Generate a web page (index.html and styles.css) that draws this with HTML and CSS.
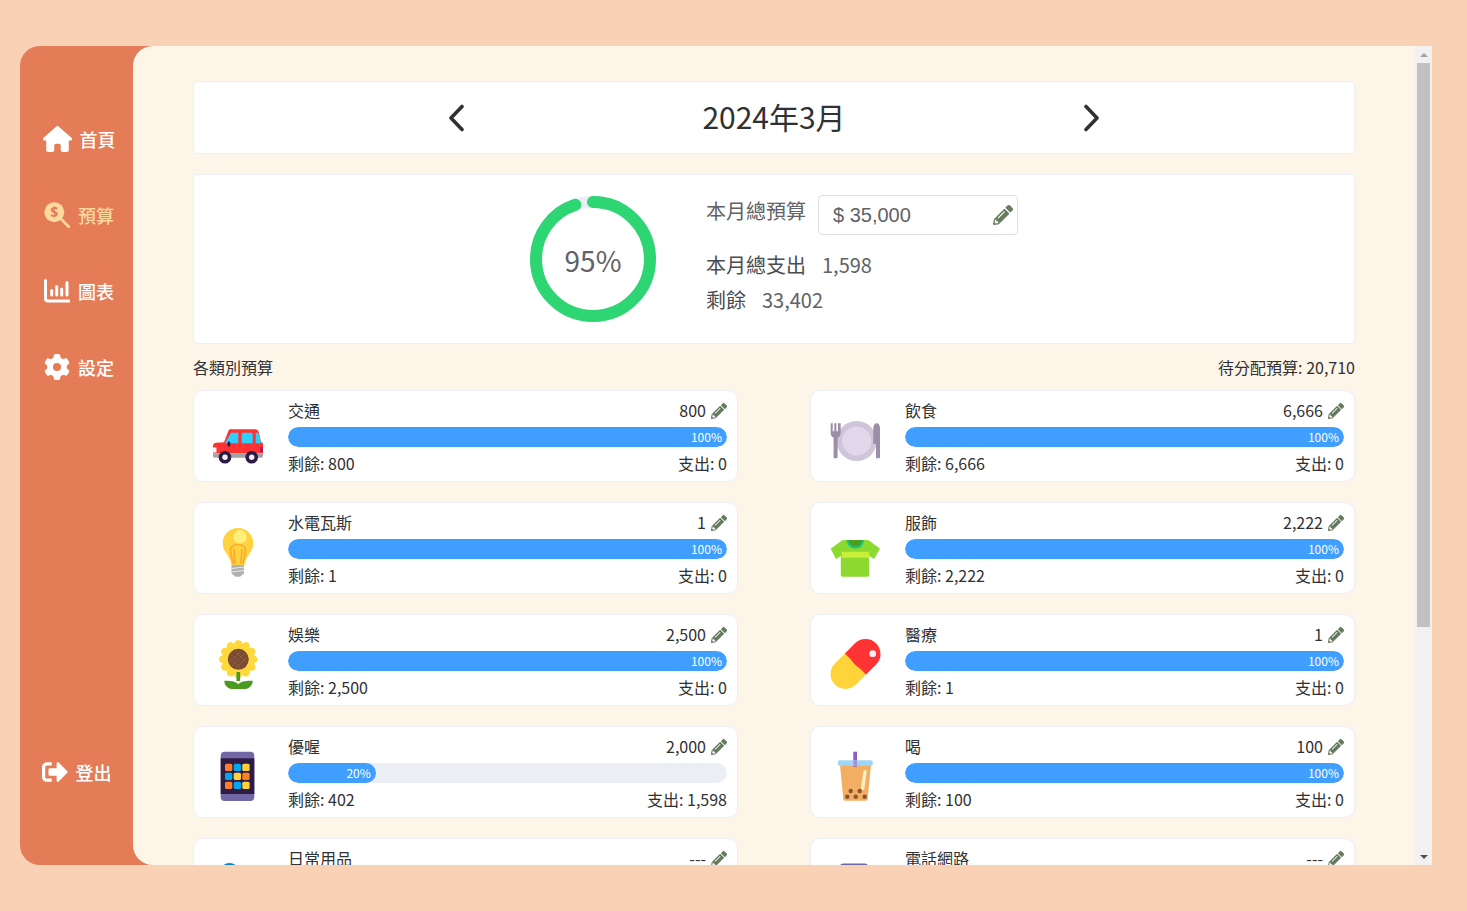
FILE: index.html
```html
<!DOCTYPE html>
<html lang="zh-Hant">
<head>
<meta charset="utf-8">
<title>預算</title>
<link rel="stylesheet" href="styles.css">
</head>
<body>
<svg class="defs" aria-hidden="true">
  <symbol id="pencil" viewBox="0 0 512 512"><path d="M497.900 142.100l-46.100 46.100c-4.700 4.700-12.300 4.700-17 0l-111-111c-4.700-4.700-4.700-12.300 0-17l46.100-46.100c18.700-18.700 49.100-18.700 67.900 0l60.100 60.100c18.800 18.700 18.800 49.100 0 67.900zM284.200 99.800L21.600 362.400.4 483.900c-2.900 16.400 11.400 30.600 27.800 27.800l121.500-21.300 262.600-262.600c4.700-4.700 4.700-12.300 0-17l-111-111c-4.800-4.700-12.400-4.700-17.100 0zM124.100 339.900c-5.500-5.500-5.500-14.300 0-19.800l154-154c5.500-5.500 14.300-5.500 19.800 0s5.500 14.300 0 19.800l-154 154c-5.500 5.500-14.300 5.500-19.800 0zM88 424h48v36.300l-64.500 11.300-31.100-31.100L51.700 376H88v48z"/></symbol>
</svg>
<div class="app">
  <aside class="sidebar">
    <nav class="nav">
      <a class="nav-item">
        <svg class="ic-home" viewBox="0 0 576 512"><path d="M575.8 255.5c0 18-15 32.1-32 32.1h-32l.7 160.2c0 2.7-.2 5.4-.5 8.1V472c0 22.1-17.9 40-40 40H456c-1.1 0-2.2 0-3.3-.1c-1.4 .1-2.8 .1-4.2 .1H416 392c-22.1 0-40-17.9-40-40V448 384c0-17.7-14.3-32-32-32H256c-17.7 0-32 14.3-32 32v64 24c0 22.1-17.9 40-40 40H160 128.1c-1.5 0-3-.1-4.5-.2c-1.2 .1-2.4 .2-3.6 .2H104c-22.1 0-40-17.9-40-40V360c0-.9 0-1.9 .1-2.8V287.6H32c-18 0-32-14-32-32.1c0-9 3-17 10-24L266.4 8c7-7 15-8 22-8s15 2 21 7L564.8 231.5c8 7 12 15 11 24z"/></svg>
        <span>首頁</span>
      </a>
      <a class="nav-item active">
        <svg class="ic" viewBox="0 0 26 26"><path class="stroke-handle" d="M16 16l9 9"/><circle cx="10.300" cy="10.300" r="10"/><text class="dollar" x="10.300" y="15.200">$</text></svg>
        <span>預算</span>
      </a>
      <a class="nav-item">
        <svg class="ic" viewBox="0 0 26 26"><path class="chart-axis" d="M1.500 2.500V20.500a2.500 2.500 0 0 0 2.500 2.500H25"/><path class="chart-bars" d="M7.700 12.500v4.500M12.700 8.500v8.500M17.700 11v6M23 4.500v12.500"/></svg>
        <span>圖表</span>
      </a>
      <a class="nav-item">
        <svg class="ic" viewBox="0 0 512 512"><path d="M495.9 166.6c3.2 8.7 .5 18.4-6.4 24.6l-43.3 39.4c1.1 8.3 1.700 16.800 1.700 25.400s-.6 17.100-1.700 25.400l43.300 39.400c6.900 6.200 9.600 15.900 6.400 24.600c-4.400 11.900-9.700 23.300-15.800 34.300l-4.700 8.100c-6.600 11-14 21.400-22.100 31.200c-5.900 7.200-15.700 9.600-24.500 6.800l-55.700-17.700c-13.400 10.300-28.200 18.900-44 25.400l-12.500 57.100c-2 9.100-9 16.300-18.200 17.800c-13.800 2.300-28 3.500-42.500 3.500s-28.700-1.200-42.500-3.500c-9.200-1.500-16.200-8.700-18.200-17.800l-12.500-57.100c-15.800-6.500-30.600-15.100-44-25.400L83.100 425.900c-8.800 2.800-18.600 .3-24.500-6.800c-8.100-9.800-15.500-20.200-22.100-31.200l-4.700-8.100c-6.100-11-11.400-22.400-15.800-34.300c-3.200-8.700-.5-18.400 6.400-24.600l43.300-39.400C64.600 273.100 64 264.600 64 256s.6-17.100 1.700-25.400L22.400 191.200c-6.900-6.200-9.600-15.900-6.400-24.600c4.400-11.900 9.700-23.300 15.800-34.300l4.700-8.100c6.600-11 14-21.400 22.100-31.200c5.900-7.200 15.700-9.600 24.500-6.800l55.700 17.700c13.400-10.300 28.200-18.900 44-25.400l12.500-57.100c2-9.100 9-16.300 18.200-17.800C227.300 1.200 241.500 0 256 0s28.700 1.200 42.500 3.500c9.200 1.500 16.200 8.700 18.200 17.800l12.500 57.100c15.800 6.500 30.600 15.100 44 25.400l55.700-17.700c8.800-2.800 18.600-.3 24.500 6.800c8.100 9.800 15.500 20.200 22.100 31.200l4.700 8.100c6.100 11 11.400 22.400 15.800 34.300zM256 336a80 80 0 1 0 0-160 80 80 0 1 0 0 160z"/></svg>
        <span>設定</span>
      </a>
    </nav>
    <a class="nav-item logout">
      <svg class="ic" viewBox="0 0 512 512"><path d="M497 273L329 441c-15 15-41 4.500-41-17v-96H152c-13.300 0-24-10.700-24-24v-96c0-13.300 10.700-24 24-24h136V88c0-21.400 25.900-32 41-17l168 168c9.300 9.400 9.300 24.600 0 34zM192 436v-40c0-6.600-5.400-12-12-12H96c-17.700 0-32-14.300-32-32V160c0-17.700 14.300-32 32-32h84c6.600 0 12-5.400 12-12V76c0-6.600-5.400-12-12-12H96c-53 0-96 43-96 96v192c0 53 43 96 96 96h84c6.600 0 12-5.400 12-12z"/></svg>
      <span>登出</span>
    </a>
  </aside>

  <main class="main">
    <div class="content">
      <section class="panel month">
        <svg class="chev" viewBox="0 0 16 28"><path d="M14 2.500L3 14l11 11.500"/></svg>
        <h1 class="month-title">2024年3月</h1>
        <svg class="chev" viewBox="0 0 16 28"><path d="M2 2.500L13 14 2 25.500"/></svg>
      </section>

      <section class="panel summary">
        <div class="gauge">
          <svg viewBox="0 0 126 126">
            <circle class="gauge-track" cx="63" cy="63" r="57"/>
            <circle class="gauge-fill" cx="63" cy="63" r="57" pathLength="100" transform="rotate(-90 63 63)"/>
          </svg>
          <span class="gauge-text">95%</span>
        </div>
        <div class="totals">
          <div class="budget-row">
            <span class="budget-label">本月總預算</span>
            <div class="budget-input">
              <span class="budget-amount">$ 35,000</span>
              <svg class="pencil-lg"><use href="#pencil"/></svg>
            </div>
          </div>
          <div class="total-line"><span class="total-label">本月總支出</span><span>1,598</span></div>
          <div class="total-line"><span class="total-label">剩餘</span><span>33,402</span></div>
        </div>
      </section>

      <div class="section-head"><span>各類別預算</span><span>待分配預算: 20,710</span></div>

      <div class="cards">
        <article class="card">
          <svg class="emoji" viewBox="0 0 50 50">
            <path fill="#ff3232" d="M18 14.300h24c2 0 3.300 1 3.800 3L48 27c1.300.3 2 1.200 2 2.500V38.300H0V31c0-1.800 1.200-2.900 3-3.200l8-.5 4-10.300c.6-1.700 1.500-3 3-3z"/>
            <path fill="#a3a3a3" d="M0 38.300h50v2.400c0 1.200-.8 2-2 2H2c-1.200 0-2-.8-2-2z"/>
            <path fill="#2dcfff" d="M12 28.300l6-10.600h7.300v10.600zM28.700 19.200c0-.9.600-1.500 1.500-1.500h8c.9 0 1.500.6 1.500 1.500v9.100H28.700zM42.700 17.700h2.500l3.100 10.600h-5.600z"/>
            <rect fill="#2d1b45" x="14.500" y="26.500" width="2.800" height="5" rx="1.200"/>
            <rect fill="#f4f4f4" x="0" y="32.500" width="3.500" height="5"/>
            <rect fill="#c2185b" x="47" y="32" width="3" height="5"/>
            <circle fill="#2d1b45" cx="12" cy="42.300" r="6.300"/><circle fill="#f2eef2" cx="12" cy="42.300" r="2.700"/>
            <circle fill="#2d1b45" cx="38.700" cy="42.300" r="6.300"/><circle fill="#f2eef2" cx="38.700" cy="42.300" r="2.700"/>
          </svg>
          <div class="card-body">
            <div class="row"><span>交通</span><span class="value">800<svg class="pencil"><use href="#pencil"/></svg></span></div>
            <div class="bar"><div class="bar-fill" style="width:100%">100%</div></div>
            <div class="row"><span>剩餘: 800</span><span>支出: 0</span></div>
          </div>
        </article>

        <article class="card">
          <svg class="emoji" viewBox="0 0 50 50">
            <path fill="#ffd23f" d="M25 1c8.500 0 15.300 6.800 15.300 15.300 0 4.300-1.800 7.500-4 10.700-2.200 3.200-4.300 6.500-4.800 11H18.500c-.5-4.500-2.600-7.800-4.800-11-2.200-3.200-4-6.400-4-10.700C9.700 7.800 16.500 1 25 1z"/>
            <path fill="none" stroke="#fba92c" stroke-width="1.600" d="M20 37c-.3-5-2.500-9-2.500-14 0-3 3-5.500 7.500-5.500s7.500 2.500 7.500 5.500c0 5-2.200 9-2.500 14M21 22l1 15M29 22l-1 15"/>
            <circle fill="#fff07a" cx="27" cy="9.700" r="6.700"/>
            <path fill="#b0b0b0" d="M18.500 38h12.500v8.500L27 49.700h-4.500l-4-3.200z"/>
            <path fill="none" stroke="#e8e8e8" stroke-width="1.200" d="M18.500 41.500l12.500-1.500M18.500 45l12.500-1.500"/>
          </svg>
          <div class="card-body">
            <div class="row"><span>水電瓦斯</span><span class="value">1<svg class="pencil"><use href="#pencil"/></svg></span></div>
            <div class="bar"><div class="bar-fill" style="width:100%">100%</div></div>
            <div class="row"><span>剩餘: 1</span><span>支出: 0</span></div>
          </div>
        </article>

        <article class="card">
          <svg class="emoji" viewBox="0 0 50 50">
            <g fill="#ffd83b">
              <ellipse cx="25.300" cy="6.500" rx="4.300" ry="5.500"/>
              <ellipse cx="25.300" cy="6.500" rx="4.300" ry="5.500" transform="rotate(30 25.300 20.300)"/>
              <ellipse cx="25.300" cy="6.500" rx="4.300" ry="5.500" transform="rotate(60 25.300 20.300)"/>
              <ellipse cx="25.300" cy="6.500" rx="4.300" ry="5.500" transform="rotate(90 25.300 20.300)"/>
              <ellipse cx="25.300" cy="6.500" rx="4.300" ry="5.500" transform="rotate(120 25.300 20.300)"/>
              <ellipse cx="25.300" cy="6.500" rx="4.300" ry="5.500" transform="rotate(150 25.300 20.300)"/>
              <ellipse cx="25.300" cy="6.500" rx="4.300" ry="5.500" transform="rotate(180 25.300 20.300)"/>
              <ellipse cx="25.300" cy="6.500" rx="4.300" ry="5.500" transform="rotate(210 25.300 20.300)"/>
              <ellipse cx="25.300" cy="6.500" rx="4.300" ry="5.500" transform="rotate(240 25.300 20.300)"/>
              <ellipse cx="25.300" cy="6.500" rx="4.300" ry="5.500" transform="rotate(270 25.300 20.300)"/>
              <ellipse cx="25.300" cy="6.500" rx="4.300" ry="5.500" transform="rotate(300 25.300 20.300)"/>
              <ellipse cx="25.300" cy="6.500" rx="4.300" ry="5.500" transform="rotate(330 25.300 20.300)"/>
            </g>
            <circle fill="#ffd83b" cx="25.300" cy="20.300" r="13"/>
            <circle fill="#7b4a33" cx="25.300" cy="20.300" r="10.500"/>
            <path stroke="#8f5c40" stroke-width="1" fill="none" d="M18 15l14 14M22 12l11 11M17 19l11 11M32 14L18 28M28 12L16 24M34 18L22 30"/>
            <path fill="#4a9a1f" d="M23.500 33h3.600v9h-3.600zM11.300 41.700c5 0 10.500 0 14 3.500 3.500-3.500 9-3.500 14.400-3.500 0 5-4 8.300-8.400 8.300H19.700c-4.400 0-8.400-3.300-8.400-8.300z"/>
          </svg>
          <div class="card-body">
            <div class="row"><span>娛樂</span><span class="value">2,500<svg class="pencil"><use href="#pencil"/></svg></span></div>
            <div class="bar"><div class="bar-fill" style="width:100%">100%</div></div>
            <div class="row"><span>剩餘: 2,500</span><span>支出: 0</span></div>
          </div>
        </article>

        <article class="card">
          <svg class="emoji" viewBox="0 0 50 50">
            <rect fill="#7267a5" x="7.700" y="0.700" width="33.600" height="49.300" rx="4"/>
            <rect fill="#2f1c45" x="7.700" y="7.300" width="33.600" height="35.700"/>
            <g fill="#ff7f27"><rect x="12" y="12.700" width="7.300" height="7.300" rx="1.500"/><rect x="29.300" y="21.700" width="7.300" height="7.300" rx="1.500"/><rect x="12" y="30.700" width="7.300" height="7.300" rx="1.500"/></g>
            <g fill="#00a8f0"><rect x="20.700" y="12.700" width="7.300" height="7.300" rx="1.500"/><rect x="12" y="21.700" width="7.300" height="7.300" rx="1.500"/><rect x="20.700" y="30.700" width="7.300" height="7.300" rx="1.500"/></g>
            <g fill="#ffd23b"><rect x="29.300" y="12.700" width="7.300" height="7.300" rx="1.500"/><rect x="20.700" y="21.700" width="7.300" height="7.300" rx="1.500"/><rect x="29.300" y="30.700" width="7.300" height="7.300" rx="1.500"/></g>
          </svg>
          <div class="card-body">
            <div class="row"><span>優喔</span><span class="value">2,000<svg class="pencil"><use href="#pencil"/></svg></span></div>
            <div class="bar"><div class="bar-fill" style="width:20%">20%</div></div>
            <div class="row"><span>剩餘: 402</span><span>支出: 1,598</span></div>
          </div>
        </article>

        <article class="card">
          <svg class="emoji" viewBox="0 0 50 50">
            <circle fill="#0b84c8" cx="16.500" cy="10" r="10"/>
          </svg>
          <div class="card-body">
            <div class="row"><span>日常用品</span><span class="value">---<svg class="pencil"><use href="#pencil"/></svg></span></div>
            <div class="bar"><div class="bar-fill" style="width:0"></div></div>
            <div class="row"><span>剩餘: ---</span><span>支出: 0</span></div>
          </div>
        </article>

        <article class="card">
          <svg class="emoji" viewBox="0 0 50 50">
            <circle fill="#cfc5d8" cx="26.700" cy="26" r="20"/>
            <circle fill="#e0d8ea" cx="26.700" cy="26" r="14.500"/>
            <path fill="#9a8ea8" d="M.7 8.300h2v8h1.600v-8h2.100v8h1.600v-8h2.700v10c0 2.200-1.500 3.700-3.100 4.200v19.800c0 .7-.5 1-1.500 1h-1c-1 0-1.500-.3-1.500-1V22.500C1.900 22 .7 20.500.7 18.300zM46.700 8.300c2 0 3.300 2 3.300 5v29c0 .7-.5 1-1.500 1h-1c-1 0-1.500-.3-1.500-1V29h-2.700V13.300c0-3 1.400-5 3.400-5z"/>
          </svg>
          <div class="card-body">
            <div class="row"><span>飲食</span><span class="value">6,666<svg class="pencil"><use href="#pencil"/></svg></span></div>
            <div class="bar"><div class="bar-fill" style="width:100%">100%</div></div>
            <div class="row"><span>剩餘: 6,666</span><span>支出: 0</span></div>
          </div>
        </article>

        <article class="card">
          <svg class="emoji" viewBox="0 0 50 50">
            <path fill="#8cd92f" d="M14 13h23c1 0 2 .3 2.800 1L50 21.700l-6 10.300-4.800-3v19c0 1-.6 1.700-1.700 1.700h-25c-1 0-1.700-.7-1.700-1.700V29l-4.800 3L.7 21.700 11.200 14c.8-.7 1.800-1 2.800-1z"/>
            <path fill="#c6ef38" d="M11.700 24.700h27.600v6H11.700z"/>
            <path fill="#16c97a" d="M16.500 13h17.600c-.4 5-4 8.500-8.800 8.500S16.900 18 16.500 13z"/>
            <path fill="#4f9d1f" d="M18.500 13h13.600c-.4 3.600-3.200 6.500-6.800 6.500s-6.400-2.900-6.800-6.500z"/>
          </svg>
          <div class="card-body">
            <div class="row"><span>服飾</span><span class="value">2,222<svg class="pencil"><use href="#pencil"/></svg></span></div>
            <div class="bar"><div class="bar-fill" style="width:100%">100%</div></div>
            <div class="row"><span>剩餘: 2,222</span><span>支出: 0</span></div>
          </div>
        </article>

        <article class="card">
          <svg class="emoji" viewBox="0 0 50 50">
            <path stroke="#ffd43b" stroke-width="30" stroke-linecap="round" d="M15.500 35L25.500 25"/>
            <path stroke="#ff3333" stroke-width="30" d="M25.500 25L35.500 15"/>
            <circle fill="#ff3333" cx="35.500" cy="15" r="15"/>
            <circle fill="#f4eef2" cx="42.700" cy="14.700" r="3.400"/>
          </svg>
          <div class="card-body">
            <div class="row"><span>醫療</span><span class="value">1<svg class="pencil"><use href="#pencil"/></svg></span></div>
            <div class="bar"><div class="bar-fill" style="width:100%">100%</div></div>
            <div class="row"><span>剩餘: 1</span><span>支出: 0</span></div>
          </div>
        </article>

        <article class="card">
          <svg class="emoji" viewBox="0 0 50 50">
            <path fill="#f2ae62" d="M10 14h31l-3.400 34c-.1 1-.7 1.700-1.700 1.700H15c-1 0-1.600-.7-1.700-1.700z"/>
            <rect fill="#8e5cc4" x="23.300" y="0.700" width="3.700" height="15"/>
            <rect fill="#9fd6f5" x="8" y="9.300" width="34.700" height="5.400" rx="1.500"/>
            <rect fill="#a98fd8" x="23.300" y="9.300" width="3.700" height="5.400"/>
            <path stroke="#fdeec0" stroke-width="3.500" stroke-linecap="round" d="M35 20.700L32.700 37.300"/>
            <g fill="#8a5230"><circle cx="20.700" cy="40" r="2.200"/><circle cx="29.700" cy="40" r="2.200"/><circle cx="17.300" cy="45.700" r="2.200"/><circle cx="25.700" cy="45.700" r="2.200"/><circle cx="34.700" cy="45.700" r="2.200"/></g>
          </svg>
          <div class="card-body">
            <div class="row"><span>喝</span><span class="value">100<svg class="pencil"><use href="#pencil"/></svg></span></div>
            <div class="bar"><div class="bar-fill" style="width:100%">100%</div></div>
            <div class="row"><span>剩餘: 100</span><span>支出: 0</span></div>
          </div>
        </article>

        <article class="card">
          <svg class="emoji" viewBox="0 0 50 50">
            <rect fill="#7267a5" x="10" y="0.500" width="28" height="49" rx="3"/>
          </svg>
          <div class="card-body">
            <div class="row"><span>電話網路</span><span class="value">---<svg class="pencil"><use href="#pencil"/></svg></span></div>
            <div class="bar"><div class="bar-fill" style="width:0"></div></div>
            <div class="row"><span>剩餘: ---</span><span>支出: 0</span></div>
          </div>
        </article>
      </div>
    </div>
    <div class="scrollbar" aria-hidden="true">
      <span class="scroll-btn"><i class="arrow-up"></i></span>
      <span class="scroll-track"><i class="scroll-thumb"></i></span>
      <span class="scroll-btn"><i class="arrow-down"></i></span>
    </div>
  </main>
</div>
</body>
</html>
```

FILE: styles.css
```css
* { box-sizing: border-box; }
html, body { height: 100%; }
body {
  margin: 0;
  padding: 46px 35px 46px 20px;
  background: #f9d2b5;
  font-family: "Noto Sans CJK TC", "Noto Sans", sans-serif;
  font-size: 16px;
  color: #303133;
  overflow: hidden;
}
.defs { display: none; }
svg { display: block; }

.app {
  display: flex;
  height: 819px;
  background: #e47c58;
  border-radius: 20px 0 0 20px;
  overflow: hidden;
}

.sidebar {
  flex: 0 0 113px;
  display: flex;
  flex-direction: column;
  justify-content: space-between;
  padding: 55px 0 55px;
  color: #fff;
}
.nav { padding-left: 5px; }
.nav-item {
  display: flex;
  align-items: center;
  justify-content: center;
  gap: 8px;
  height: 76px;
  font-size: 18px;
  font-weight: 500;
  line-height: 26px;
  color: #fff;
}
.nav-item.active { color: #fcd99c; }
.nav-item svg { fill: currentColor; }
.ic-home { width: 29px; height: 26px; }
.ic { width: 26px; height: 26px; }
.stroke-handle { stroke: currentColor; stroke-width: 2.600; stroke-linecap: round; fill: none; }
.dollar { fill: #e47c58; font-size: 14px; font-weight: 700; text-anchor: middle; font-family: "Noto Sans", sans-serif; }
.chart-axis { fill: none; stroke: currentColor; stroke-width: 3; stroke-linecap: round; }
.chart-bars { fill: none; stroke: currentColor; stroke-width: 3; stroke-linecap: round; }

.main {
  flex: 1;
  min-width: 0;
  display: flex;
  background: #fef5e9;
  border-radius: 20px 0 0 20px;
  overflow: hidden;
}
.content {
  flex: 1;
  min-width: 0;
  padding: 35px 60px 40px;
}

.scrollbar {
  flex: 0 0 17px;
  display: flex;
  flex-direction: column;
  background: #f1f1f1;
}
.scroll-btn {
  flex: 0 0 17px;
  display: flex;
  align-items: center;
  justify-content: center;
}
.arrow-up, .arrow-down {
  width: 0;
  height: 0;
  border-left: 4px solid transparent;
  border-right: 4px solid transparent;
}
.arrow-up { border-bottom: 4px solid #a3a3a3; }
.arrow-down { border-top: 4px solid #505050; }
.scroll-track { flex: 1; padding: 0 2px; }
.scroll-thumb { display: block; height: 564px; background: #c1c1c1; }

.panel {
  background: #fff;
  border: 1px solid #ebeef5;
  border-radius: 4px;
}
.month {
  display: flex;
  align-items: center;
  justify-content: center;
  gap: 238px;
  height: 73px;
  margin-bottom: 20px;
}
.month-title {
  margin: 0 0 4px;
  font-size: 30px;
  font-weight: 400;
  line-height: 40px;
  color: #303133;
}
.chev { width: 16px; height: 28px; }
.chev path { fill: none; stroke: #303133; stroke-width: 3.600; stroke-linecap: round; stroke-linejoin: round; }

.summary {
  display: flex;
  justify-content: center;
  gap: 50px;
  height: 170px;
  padding-top: 20px;
  color: #606266;
  font-size: 20px;
}
.gauge { position: relative; width: 126px; height: 126px; flex: none; margin-top: 1px; }
.gauge-track { fill: none; stroke: #ebeef5; stroke-width: 12; }
.gauge-fill { fill: none; stroke: #2ed573; stroke-width: 12; stroke-linecap: round; stroke-dasharray: 95 100; }
.gauge-text {
  position: absolute;
  inset: 2px 0 0;
  display: flex;
  align-items: center;
  justify-content: center;
  font-size: 28px;
  color: #606266;
}
.totals { width: 312px; }
.budget-row { display: flex; gap: 12px; margin-bottom: 12px; }
.budget-label { line-height: 32px; }
.budget-input {
  display: flex;
  align-items: center;
  justify-content: space-between;
  width: 200px;
  height: 40px;
  padding: 0 4px 0 14px;
  border: 1px solid #dcdfe6;
  border-radius: 4px;
  background: #fff;
}
.budget-amount { font-family: "Liberation Sans", Arial, sans-serif; line-height: 38px; }
.pencil-lg { width: 20px; height: 20px; fill: #667a5e; }
.total-line { display: flex; gap: 16px; line-height: 35px; }
.total-label { color: #4a4c50; }

.section-head {
  display: flex;
  justify-content: space-between;
  margin-top: 11px;
  line-height: 24px;
  height: 35px;
  color: #303133;
}

.cards {
  display: grid;
  grid-auto-flow: column;
  grid-template-rows: repeat(5, 92px);
  grid-template-columns: 1fr 1fr;
  gap: 20px 72px;
}
.card {
  display: flex;
  align-items: flex-start;
  gap: 25px;
  height: 92px;
  padding: 7px 10px 5px 19px;
  background: #fff;
  border: 1px solid #ebeef5;
  border-radius: 10px;
}
.emoji { flex: none; width: 50px; height: 50px; margin-top: 17px; overflow: visible; }
.card-body { flex: 1; min-width: 0; }
.row { display: flex; justify-content: space-between; line-height: 24px; height: 24px; }
.value { display: flex; align-items: center; gap: 5px; }
.pencil { width: 16px; height: 16px; margin-top: 2px; fill: #667a5e; }
.bar {
  height: 20px;
  margin: 5px 0 4px;
  border-radius: 10px;
  background: #ebeef5;
  overflow: hidden;
}
.bar-fill {
  height: 100%;
  padding-right: 5px;
  border-radius: 10px;
  background: #409eff;
  color: #fff;
  font-size: 12px;
  line-height: 20px;
  text-align: right;
}
```
